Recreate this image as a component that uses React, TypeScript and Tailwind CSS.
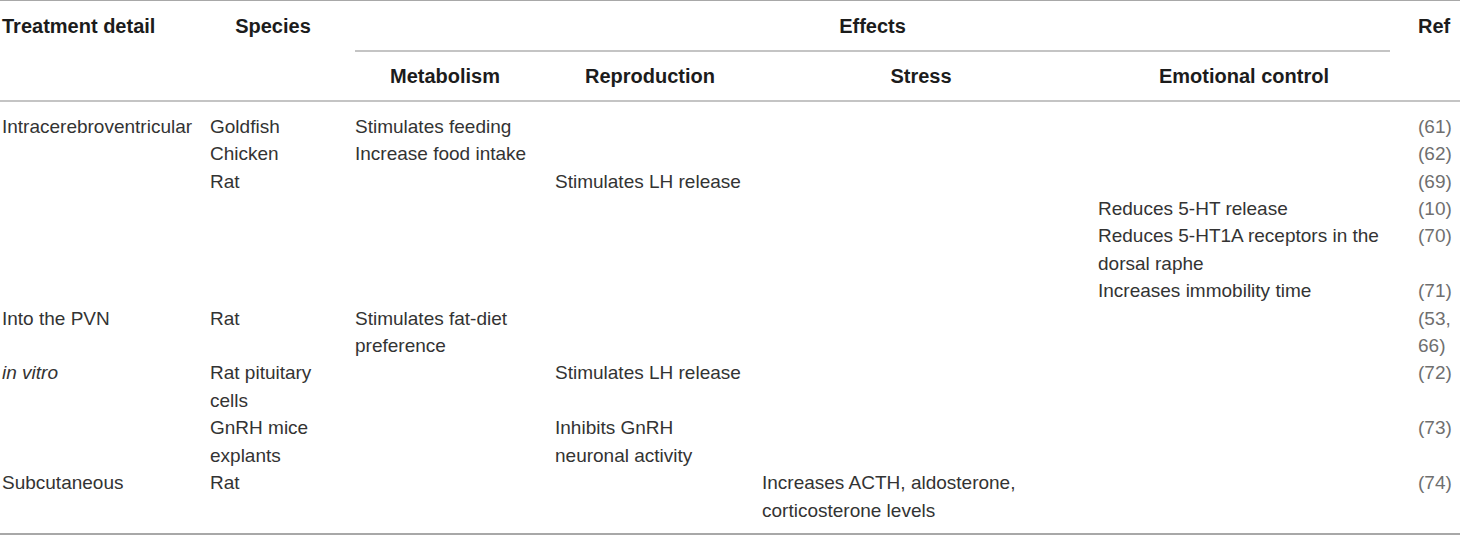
import React from 'react';

type Row = {
  treatment?: React.ReactNode;
  species?: string[];
  metabolism?: string[];
  reproduction?: string[];
  stress?: string[];
  emotional?: string[];
  refs: string[];
};

const rows: Row[] = [
  { treatment: 'Intracerebroventricular', species: ['Goldfish'], metabolism: ['Stimulates feeding'], refs: ['(61)'] },
  { species: ['Chicken'], metabolism: ['Increase food intake'], refs: ['(62)'] },
  { species: ['Rat'], reproduction: ['Stimulates LH release'], refs: ['(69)'] },
  { emotional: ['Reduces 5-HT release'], refs: ['(10)'] },
  { emotional: ['Reduces 5-HT1A receptors in the', 'dorsal raphe'], refs: ['(70)'] },
  { emotional: ['Increases immobility time'], refs: ['(71)'] },
  { treatment: 'Into the PVN', species: ['Rat'], metabolism: ['Stimulates fat-diet', 'preference'], refs: ['(53,', '66)'] },
  { treatment: <i>in vitro</i>, species: ['Rat pituitary', 'cells'], reproduction: ['Stimulates LH release'], refs: ['(72)'] },
  { species: ['GnRH mice', 'explants'], reproduction: ['Inhibits GnRH', 'neuronal activity'], refs: ['(73)'] },
  { treatment: 'Subcutaneous', species: ['Rat'], stress: ['Increases ACTH, aldosterone,', 'corticosterone levels'], refs: ['(74)'] },
];

const Lines = ({ lines }: { lines?: string[] }) => (
  <>
    {lines?.map(l => (
      <div key={l} className="whitespace-nowrap">{l}</div>
    ))}
  </>
);

const App: React.FC = () => {
  return (
    <div className="w-[1460px] h-[535px] bg-white font-['Liberation_Sans',Arial,sans-serif]">
      <table className="w-[1460px] table-fixed border-separate border-spacing-0 border-t border-b-2 border-[#a8a8a8]">
        <colgroup>
          <col className="w-[205px]" />
          <col className="w-[147px]" />
          <col className="w-[200px]" />
          <col className="w-[207px]" />
          <col className="w-[336px]" />
          <col className="w-[305px]" />
          <col className="w-[60px]" />
        </colgroup>
        <thead className="text-[20px] leading-[27.4px] font-bold text-[#1c1c1c]">
          <tr>
            <th rowSpan={2} className="align-top text-left pl-[2px] pt-[12px] border-b-2 border-[#c4c4c4]">
              Treatment detail
            </th>
            <th rowSpan={2} className="align-top text-center pl-[5px] pr-[16px] pt-[12px] border-b-2 border-[#c4c4c4]">
              Species
            </th>
            <th colSpan={4} className="align-top pl-[3px] pr-[10px] pt-[12px]">
              <div className="border-b-2 border-[#c4c4c4] pb-[10px] text-center">Effects</div>
            </th>
            <th rowSpan={2} className="align-top text-left pl-[18px] pt-[12px] border-b-2 border-[#c4c4c4]">
              Ref
            </th>
          </tr>
          <tr>
            <th className="text-center pl-[3px] pr-[17px] pt-[11px] pb-[9px] border-b-2 border-[#c4c4c4]">Metabolism</th>
            <th className="text-center pl-[3px] pr-[14px] pt-[11px] pb-[9px] border-b-2 border-[#c4c4c4]">Reproduction</th>
            <th className="text-center pl-[3px] pr-[15px] pt-[11px] pb-[9px] border-b-2 border-[#c4c4c4]">Stress</th>
            <th className="text-center pl-[3px] pr-[10px] pt-[11px] pb-[9px] border-b-2 border-[#c4c4c4]">Emotional control</th>
          </tr>
        </thead>
        <tbody className="text-[19px] leading-[27.4px] text-[#333333]">
          {rows.map((r, i) => {
            const pad = i === 0 ? 'pt-[11px]' : i === rows.length - 1 ? 'pb-[9px]' : '';
            return (
              <tr key={i} className="align-top">
                <td className={`pl-[2px] ${pad}`}>
                  <div className="whitespace-nowrap">{r.treatment}</div>
                </td>
                <td className={`pl-[5px] ${pad}`}><Lines lines={r.species} /></td>
                <td className={`pl-[3px] ${pad}`}><Lines lines={r.metabolism} /></td>
                <td className={`pl-[3px] ${pad}`}><Lines lines={r.reproduction} /></td>
                <td className={`pl-[3px] ${pad}`}><Lines lines={r.stress} /></td>
                <td className={`pl-[3px] ${pad}`}><Lines lines={r.emotional} /></td>
                <td className={`pl-[18px] text-[#6f6f6f] ${pad}`}><Lines lines={r.refs} /></td>
              </tr>
            );
          })}
        </tbody>
      </table>
    </div>
  );
};

export default App;
